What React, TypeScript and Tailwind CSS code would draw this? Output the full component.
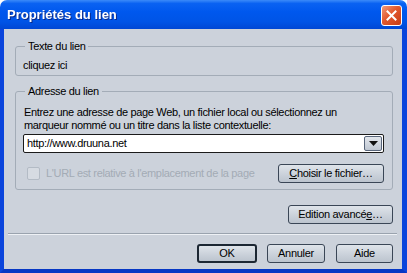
import React from "react";

const font = "font-['Liberation_Sans',Arial,sans-serif]";

function XpButton({ children, className = "", isDefault = false }: { children: React.ReactNode; className?: string; isDefault?: boolean }) {
  return (
    <button
      type="button"
      className={`h-[19px] rounded-[3px] bg-[linear-gradient(to_bottom,#dfe4ea,#c9d0d9_60%,#bcc4ce)] text-[11px] leading-none text-black tracking-[-0.3px] flex items-center justify-center ${
        isDefault ? "border-2 border-[#1c2733]" : "border border-[#3a4656]"
      } ${className}`}
    >
      {children}
    </button>
  );
}

export default function App() {
  return (
    <div className={`w-[407px] h-[273px] flex flex-col bg-white ${font}`}>
      {/* barre de titre */}
      <div className="h-[29px] shrink-0 rounded-t-[7px] bg-[linear-gradient(to_bottom,#3b8af9_0%,#0a62f2_12%,#0058ee_40%,#0054e6_75%,#0047d4_100%)] flex items-center justify-between pl-[7px] pr-[5px]">
        <span className="text-white font-bold text-[13px] leading-none drop-shadow-[1px_1px_0_#0a2a8a]">Propriétés du lien</span>
        <div className="w-[21px] h-[21px] mt-[2px] rounded-[3px] border border-white bg-[linear-gradient(135deg,#f09a7a,#e2582e_45%,#c73c14)] flex items-center justify-center">
          <svg width="11" height="11" viewBox="0 0 11 11">
            <path d="M1.5 1.5 L9.5 9.5 M9.5 1.5 L1.5 9.5" stroke="white" strokeWidth="2" strokeLinecap="square" />
          </svg>
        </div>
      </div>

      {/* corps */}
      <div className="flex-1 flex flex-col bg-[#ccd2db] border-l-4 border-r-[5px] border-b-4 border-l-[#0b45dc] border-r-[#0b45dc] border-b-[#0637c4] pl-[11px] pr-[9px] text-[11px] text-black tracking-[-0.33px]">
        <fieldset className="mt-[11px] border border-[#a3acb7] rounded-[3px] pl-[7px] pr-[8px] pb-[3px]">
          <legend className="ml-[2px] px-[3px] leading-[13px]">Texte du lien</legend>
          <div className="pt-[6px] leading-[13px]">cliquez ici</div>
        </fieldset>

        <fieldset className="mt-[9px] border border-[#a3acb7] rounded-[3px] pl-[7px] pr-[8px] pb-[6px]">
          <legend className="ml-[2px] px-[3px] leading-[13px]">Adresse du lien</legend>
          <p className="pt-[8px] leading-[13px] pl-[1px]">
            Entrez une adresse de page Web, un fichier local ou sélectionnez un
            <br />
            marqueur nommé ou un titre dans la liste contextuelle:
          </p>
          <div className="mt-[2px] h-[19px] flex items-stretch bg-white border border-[#1b1b1b] rounded-[2px]">
            <span className="flex-1 pl-[3px] flex items-center leading-none">http://www.druuna.net</span>
            <div className="w-[18px] m-[1px] rounded-[2px] border border-[#58657a] bg-[linear-gradient(to_bottom,#e2e6ec,#bfc7d2)] flex items-center justify-center">
              <svg width="9" height="5" viewBox="0 0 9 5">
                <path d="M0 0 H9 L4.5 5 Z" fill="#111" />
              </svg>
            </div>
          </div>
          <div className="mt-[11px] flex items-center">
            <span className="ml-[4px] w-[13px] h-[13px] rounded-[2px] border border-[#b3bbc5] bg-[#d6dbe2]" />
            <span className="ml-[6px] text-[#a3abb5]">L'URL est relative à l'emplacement de la page</span>
            <XpButton className="ml-auto w-[106px]">
              <span>
                <span className="underline">C</span>hoisir le fichier…
              </span>
            </XpButton>
          </div>
        </fieldset>

        <div className="mt-[15px] flex justify-end">
          <XpButton className="w-[105px]">
            <span>
              Edition avancé<span className="underline">e</span>…
            </span>
          </XpButton>
        </div>

        <div className="mt-[9px] -ml-[7px] -mr-[4px] h-[2px] border-t border-[#9aa3ae] border-b border-b-[#eef1f5]" />

        <div className="mt-[9px] flex justify-end">
          <XpButton isDefault className="w-[60px]">OK</XpButton>
          <XpButton className="ml-[10px] w-[58px]">Annuler</XpButton>
          <XpButton className="ml-[11px] w-[57px]">Aide</XpButton>
        </div>
      </div>
    </div>
  );
}
